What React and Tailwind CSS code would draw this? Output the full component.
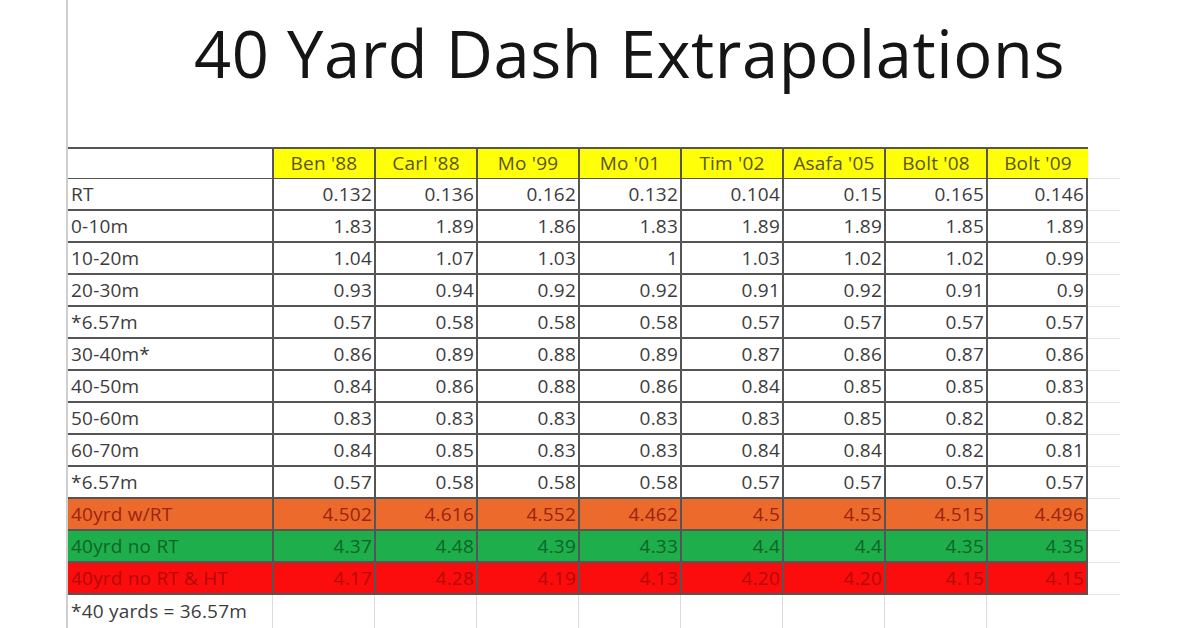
import React from 'react'

const heads = ["Ben '88", "Carl '88", "Mo '99", "Mo '01", "Tim '02", "Asafa '05", "Bolt '08", "Bolt '09"]

const rows = [
  { label: 'RT', vals: ['0.132', '0.136', '0.162', '0.132', '0.104', '0.15', '0.165', '0.146'] },
  { label: '0-10m', vals: ['1.83', '1.89', '1.86', '1.83', '1.89', '1.89', '1.85', '1.89'] },
  { label: '10-20m', vals: ['1.04', '1.07', '1.03', '1', '1.03', '1.02', '1.02', '0.99'] },
  { label: '20-30m', vals: ['0.93', '0.94', '0.92', '0.92', '0.91', '0.92', '0.91', '0.9'] },
  { label: '*6.57m', vals: ['0.57', '0.58', '0.58', '0.58', '0.57', '0.57', '0.57', '0.57'] },
  { label: '30-40m*', vals: ['0.86', '0.89', '0.88', '0.89', '0.87', '0.86', '0.87', '0.86'] },
  { label: '40-50m', vals: ['0.84', '0.86', '0.88', '0.86', '0.84', '0.85', '0.85', '0.83'] },
  { label: '50-60m', vals: ['0.83', '0.83', '0.83', '0.83', '0.83', '0.85', '0.82', '0.82'] },
  { label: '60-70m', vals: ['0.84', '0.85', '0.83', '0.83', '0.84', '0.84', '0.82', '0.81'] },
  { label: '*6.57m', vals: ['0.57', '0.58', '0.58', '0.58', '0.57', '0.57', '0.57', '0.57'] },
  { label: '40yrd w/RT', vals: ['4.502', '4.616', '4.552', '4.462', '4.5', '4.55', '4.515', '4.496'], bg: 'bg-[#ec6a2c]', fg: 'text-[#9a2410]' },
  { label: '40yrd no RT', vals: ['4.37', '4.48', '4.39', '4.33', '4.4', '4.4', '4.35', '4.35'], bg: 'bg-[#1eae4c]', fg: 'text-[#0e6428]' },
  { label: '40yrd no RT & HT', vals: ['4.17', '4.28', '4.19', '4.13', '4.20', '4.20', '4.15', '4.15'], bg: 'bg-[#fc0d0d]', fg: 'text-[#b40808]' },
]

const grid = 'grid grid-cols-[204px_repeat(8,102px)]'

export default function App() {
  return (
    <div
      className="w-[1196px] h-[628px] bg-white overflow-hidden flex"
      style={{ fontFamily: "'Open Sans', 'Noto Sans', sans-serif" }}
    >
      <div className="w-[66px] shrink-0" />
      <div className="w-[2px] shrink-0 bg-[#cfcfcf]" />

      <div className="flex flex-col">
        <h1 className="h-[147px] pl-[126px] pt-[13px] text-[65px] leading-[80px] tracking-[0.6px] text-[#151515]">
          40 Yard Dash Extrapolations
        </h1>

        <div className="flex">
          <div className="flex flex-col text-[19px] tracking-[0.2px] text-[#3c3c3c]">
            {/* header */}
            <div className={`${grid} h-[32px] border-t-2 border-b-2 border-[#555]`}>
              <div className="bg-white" />
              {heads.map((h) => (
                <div
                  key={h}
                  className="bg-[#ffff0a] border-l-2 border-[#555] flex items-center justify-center text-[#5a5510]"
                >
                  {h}
                </div>
              ))}
            </div>

            {rows.map((r, i) => (
              <div
                key={i}
                className={`${grid} h-[32px] border-b-2 border-[#555] ${r.bg || 'bg-white'}`}
              >
                <div className={`flex items-center pl-[3px] whitespace-nowrap ${r.fg || ''}`}>{r.label}</div>
                {r.vals.map((v, j) => (
                  <div
                    key={j}
                    className={`border-l-2 border-[#555] flex items-center justify-end pr-[2px] ${r.fg || ''} ${j === 7 ? 'border-r-2' : ''}`}
                  >
                    {v}
                  </div>
                ))}
              </div>
            ))}

            {/* footnote */}
            <div className={`${grid} h-[33px]`}>
              <div className="flex items-center pl-[3px] whitespace-nowrap">*40 yards = 36.57m</div>
              {heads.map((h) => (
                <div key={h} className="border-l border-[#dcdcdc]" />
              ))}
            </div>
          </div>

          {/* faint sheet gridlines to the right */}
          <div className="w-[32px] flex flex-col">
            <div className="h-[32px] border-b border-[#e4e4e4]" />
            {rows.map((r, i) => (
              <div key={i} className="h-[32px] border-b border-[#e4e4e4]" />
            ))}
          </div>
        </div>
      </div>
    </div>
  )
}
